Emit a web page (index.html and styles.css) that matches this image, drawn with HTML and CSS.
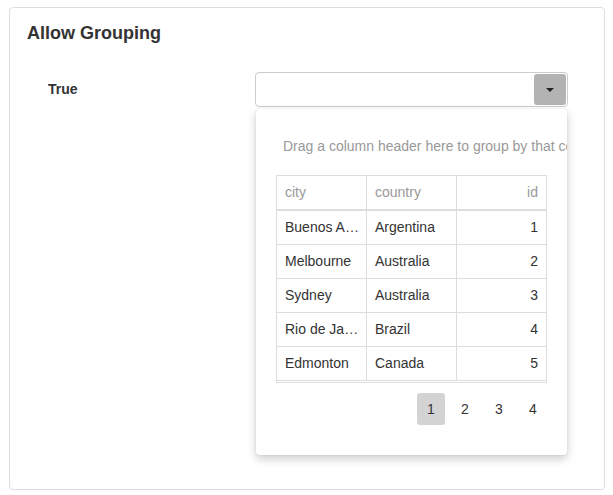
FILE: index.html
```html
<!DOCTYPE html>
<html>
<head>
<title>Allow Grouping</title>
<link rel="stylesheet" href="styles.css">
</head>
<body>
<div class="card">
	<div class="title">Allow Grouping</div>
	<div class="row">
		<div class="label">True</div>
		<div class="combo">
			<div class="input">
				<div class="btn"><span class="caret"></span></div>
			</div>
			<div class="popup">
				<div class="groupPanel">Drag a column header here to group by that column</div>
				<div class="grid">
					<div class="tr head">
						<div class="td">city</div>
						<div class="td">country</div>
						<div class="td num">id</div>
					</div>
					<div class="tr">
						<div class="td">Buenos Aires</div>
						<div class="td">Argentina</div>
						<div class="td num">1</div>
					</div>
					<div class="tr">
						<div class="td">Melbourne</div>
						<div class="td">Australia</div>
						<div class="td num">2</div>
					</div>
					<div class="tr">
						<div class="td">Sydney</div>
						<div class="td">Australia</div>
						<div class="td num">3</div>
					</div>
					<div class="tr">
						<div class="td">Rio de Janeiro</div>
						<div class="td">Brazil</div>
						<div class="td num">4</div>
					</div>
					<div class="tr">
						<div class="td">Edmonton</div>
						<div class="td">Canada</div>
						<div class="td num">5</div>
					</div>
				</div>
				<div class="pager">
					<span class="page current">1</span>
					<span class="page">2</span>
					<span class="page">3</span>
					<span class="page">4</span>
				</div>
			</div>
		</div>
	</div>
</div>
</body>
</html>
```

FILE: styles.css
```css
html,body{
	padding:0;
	margin:0;
	background-color:#FFFFFF;
	font-family:"Liberation Sans",Arial,sans-serif;
	color:#333333;
}
div.card{
	margin:7px 0 0 9px;
	width:594px;
	height:481px;
	border:1px solid #dddddd;
	border-radius:4px;
}
div.title{
	padding:15px 0 0 17px;
	font-size:18px;
	font-weight:bold;
	line-height:21px;
}
div.row{
	display:flex;
	margin-top:28px;
	padding-left:38px;
}
div.label{
	width:207px;
	font-size:14px;
	font-weight:bold;
	line-height:35px;
}
div.combo{
	position:relative;
	width:313px;
}
div.input{
	border:1px solid #cccccc;
	border-radius:4px;
	display:flex;
	justify-content:flex-end;
	padding:1px;
	height:31px;
}
div.btn{
	width:32px;
	height:31px;
	background-color:#b3b3b3;
	border-radius:3px;
	display:flex;
	align-items:center;
	justify-content:center;
}
span.caret{
	width:0;
	height:0;
	border-left:4px solid transparent;
	border-right:4px solid transparent;
	border-top:4px solid #222222;
}
div.popup{
	position:absolute;
	top:37px;
	left:1px;
	width:311px;
	height:346px;
	background-color:#FFFFFF;
	border-radius:4px;
	box-shadow:0 4px 10px rgba(0,0,0,0.2), 0 0 2px rgba(0,0,0,0.1);
	overflow:hidden;
}
div.groupPanel{
	padding:28px 0 0 27px;
	height:38px;
	font-size:14px;
	line-height:18px;
	color:#999999;
	white-space:nowrap;
}
div.grid{
	margin-left:20px;
	width:269px;
	border:1px solid #dddddd;
	padding-bottom:1px;
}
div.tr{
	display:flex;
	height:33px;
	border-bottom:1px solid #dddddd;
	font-size:14px;
	line-height:33px;
}
div.tr.head{
	height:33px;
	border-bottom:2px solid #dddddd;
	color:#999999;
}
div.td{
	width:90px;
	padding:0 7px 0 8px;
	box-sizing:border-box;
	border-right:1px solid #dddddd;
	white-space:nowrap;
	overflow:hidden;
	text-overflow:ellipsis;
}
div.td.num{
	width:89px;
	padding-right:8px;
	border-right:none;
	text-align:right;
}
div.pager{
	display:flex;
	justify-content:flex-end;
	width:291px;
	margin-top:10px;
}
span.page{
	width:28px;
	height:32px;
	margin-left:6px;
	border-radius:3px;
	font-size:14px;
	line-height:32px;
	text-align:center;
}
span.page.current{
	background-color:#d3d3d3;
}
```
